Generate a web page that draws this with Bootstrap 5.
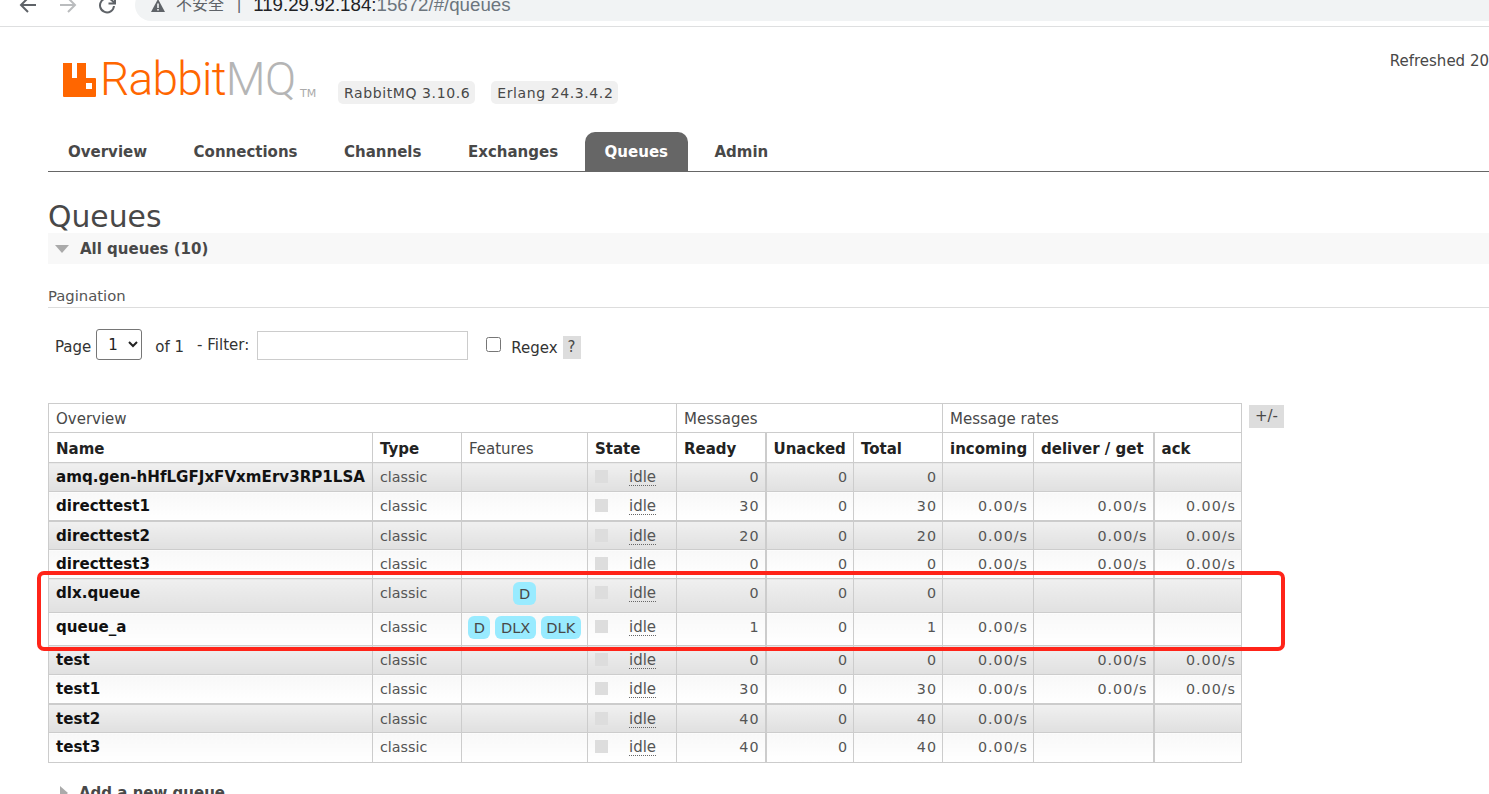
<!DOCTYPE html>
<html lang="zh">
<head>
<meta charset="utf-8">
<title>RabbitMQ Management</title>
<link href="https://cdn.jsdelivr.net/npm/bootstrap@5.3.0/dist/css/bootstrap.min.css" rel="stylesheet">
<style>
html,body{height:794px;overflow:hidden;background:#fff}
body{font-family:"DejaVu Sans","Noto Sans CJK SC",sans-serif;font-size:15px;color:#484848;line-height:1.2}
.chrome-bar{height:27px;border-bottom:1px solid #dedfe0;overflow:hidden;padding-bottom:5px}
.chrome-btns{width:135px;padding-left:19px;gap:22px;height:21px}
.addr-pill{height:32px;flex:1;background:#f1f3f4;border-radius:16px 0 0 16px;padding:0 0 0 15px;font-family:"Liberation Sans","Noto Sans CJK SC",sans-serif;font-size:16px;color:#5f6368;gap:6px}
.addr-sep{margin-left:7px}
.addr-host{color:#202124;font-size:18.7px;margin-left:6px}
.page-wrap{padding-left:48px}
.brand-row{height:105px;padding:35px 0 0 15px;position:relative}
.logo-word{font-family:Roboto,Lato,sans-serif;font-weight:300;font-size:46px;line-height:35px;letter-spacing:-.7px;margin-left:4px;color:#f60;width:193px;white-space:nowrap}
.logo-mq{color:#b5b5b5}
.logo-tm{font-size:11px;color:#aaa;line-height:1;margin:26px 0 0 7px;width:19px}
.ver-pill{background:#f0f0f0;border-radius:5px;height:23px;padding:0 5px 0 6px;font-size:14px;letter-spacing:.6px;line-height:25px;color:#484848;margin-top:19px;white-space:nowrap}
.ver-first{margin-left:19px}
.ver-next{margin-left:16px}
.refreshed{position:absolute;right:0;top:25px;font-size:15px;color:#484848}
.main-tabs{border-bottom:1px solid #666;height:40px;gap:6.5px}
.main-tabs .nav-link{font-weight:700;font-size:15px;color:#484848;padding:11px 20px 0;height:39px;border-radius:10px 10px 0 0;line-height:18px}
.main-tabs .nav-link.on{background:#666;color:#fff}
.pg-title{font-size:29.8px;font-weight:400;color:#484848;margin:28px 0 0;line-height:33px}
.sect-bar{background:#f8f8f8;height:31px;padding-left:7px;font-weight:700;font-size:15px;color:#484848;gap:11px}
.tri-down{width:0;height:0;border-left:7px solid transparent;border-right:7px solid transparent;border-top:8px solid #aaa}
.tri-right{width:0;height:0;border-top:7px solid transparent;border-bottom:7px solid transparent;border-left:8px solid #aaa;margin-left:12px}
.sub-head{margin-top:24px;height:19px;border-bottom:1px solid #ddd;font-size:14.8px;color:#555;line-height:15px;box-sizing:content-box}
.pager-row{padding:23px 0 0 7px;height:95px;font-size:15px;color:#333}
.pg-text-a{margin-top:7px}
.pg-text-b{margin-top:5px;margin-left:13px}
.pg-text-c{margin-top:8px}
.pg-sel{width:46px;height:31px;font-size:15px;padding:0 0 0 7px;margin:-2px 13px 0 5px;border:1px solid #767676;border-radius:3px;background:#fff;color:#222;font-family:inherit}
.pg-input{width:211px;height:29px;border:1px solid #ccc;margin:0 18px 0 8px;background:#fff}
.pg-check{width:15px;height:15px;margin:6px 10px 0 0;accent-color:#555}
.help-q{background:#ddd;color:#484848;width:18px;height:23px;text-align:center;line-height:23px;margin:5px 0 0 5px}
.table-row{align-items:flex-start}
.q-table{border-collapse:collapse;table-layout:fixed;width:1193px;font-size:14.3px;color:#555}
.q-table th,.q-table td{border:1px solid #ccc;padding:6px 7px 0;vertical-align:top;white-space:nowrap;overflow:hidden;line-height:17px}
.q-table thead th{background:#fff;font-weight:700;color:#222;height:30px;font-size:15px;padding-top:8px}
.q-table thead tr:first-child th{font-weight:400;color:#484848;height:29px;padding-top:7px}
.q-table th.plain{font-weight:400!important;color:#484848!important}
.q-table tbody tr{height:29px}
.q-table tbody tr.tall{height:34px}
.q-table tbody tr.tall-b{height:33px}
.q-table tbody tr.tail{height:30px}
.q-table tr.shade td{background:linear-gradient(#f0f0f0,#e0e0e0)}
.q-table tr.lite td{background:linear-gradient(#f8f8f8,#fff)}
.q-table td.qname{font-weight:700;color:#111;font-size:15.1px}
.q-table td.num{text-align:right;letter-spacing:1px;padding-right:5px}
.q-table .heavy-r{border-right:2px solid #ccc}
.q-table tr.heavy-t td{border-top:2px solid #ccc}
.state-dot{display:inline-block;width:13px;height:13px;background:#ddd;margin:1px 21px 0 0;vertical-align:top}
.idle-word{border-bottom:1px dotted #666;display:inline-block;line-height:15px;font-size:15px}
.q-table td.feat{padding:3px 6px 0;text-align:center}
.q-flag{display:inline-block;height:23px;line-height:24px;padding:0 5.5px;background:#99ebff;border-radius:6px;color:#484848;margin-left:5px;font-size:14.6px}
.q-flag:first-child{margin-left:0}
.plus-minus{background:#ddd;color:#484848;width:35px;height:23px;line-height:23px;text-align:center;margin:2px 0 0 7px;font-size:15px}
.add-head{margin-top:21px;font-weight:700;font-size:15px;color:#484848;gap:11px}
.red-mark{position:absolute;left:37px;top:571px;width:1248px;height:80px;border:4px solid #ff2419;border-radius:7px;pointer-events:none}
</style>
</head>
<body>
<div class="chrome-bar d-flex align-items-end">
  <div class="chrome-btns d-flex align-items-end">
    <svg width="18" height="24" viewBox="0 0 18 24" fill="none" stroke="#5f6368" stroke-width="2"><path d="M17 8H2M9 1 2 8l7 7"/></svg>
    <svg width="18" height="24" viewBox="0 0 18 24" fill="none" stroke="#babcbe" stroke-width="2"><path d="M1 8h15M9 1l7 7-7 7"/></svg>
    <svg width="18" height="24" viewBox="0 0 18 24" fill="none" stroke="#5f6368" stroke-width="2"><path d="M15 9a7 7 0 1 1-1.5-5l2.5 2.5"/><path d="M16 0v6.5h-6.5"/></svg>
  </div>
  <div class="addr-pill d-flex align-items-center">
    <svg width="16" height="15" viewBox="0 0 16 15"><path d="M8 1 15 14H1z" fill="#5f6368"/><path d="M7.2 5.5h1.6v4.5H7.2zM7.2 11h1.6v1.6H7.2z" fill="#f1f3f4"/></svg>
    <span class="ms-1">不安全</span><span class="addr-sep">|</span><span class="addr-host">119.29.92.184:<span class="text-secondary">15672/#/queues</span></span>
  </div>
</div>
<div class="page-wrap">
  <div class="brand-row d-flex align-items-start">
    <svg width="33" height="35" viewBox="0 0 33 35"><path fill="#f60" fill-rule="evenodd" d="M0 1h9v15h5V1h9v15h9q1 0 1 1v17q0 1-1 1H1q-1 0-1-1zM23 21v6h6v-6z"/></svg>
    <span class="logo-word">Rabbit<span class="logo-mq">MQ</span></span>
    <span class="logo-tm">TM</span>
    <span class="ver-pill ver-first">RabbitMQ 3.10.6</span>
    <span class="ver-pill ver-next">Erlang 24.3.4.2</span>
    <span class="refreshed">Refreshed 20</span>
  </div>
  <ul class="nav main-tabs">
    <li class="nav-item"><a class="nav-link" href="#">Overview</a></li>
    <li class="nav-item"><a class="nav-link" href="#">Connections</a></li>
    <li class="nav-item"><a class="nav-link" href="#">Channels</a></li>
    <li class="nav-item"><a class="nav-link" href="#">Exchanges</a></li>
    <li class="nav-item"><a class="nav-link on" href="#">Queues</a></li>
    <li class="nav-item"><a class="nav-link" href="#">Admin</a></li>
  </ul>
  <h1 class="pg-title">Queues</h1>
  <div class="sect-bar d-flex align-items-center"><span class="tri-down"></span><span>All queues (10)</span></div>
  <div class="sub-head">Pagination</div>
  <div class="pager-row d-flex align-items-start">
    <span class="pg-text-a">Page</span>
    <select class="pg-sel"><option>1</option></select>
    <span class="pg-text-a">of 1</span>
    <span class="pg-text-b">- Filter:</span>
    <input class="pg-input" type="text" aria-label="Filter">
    <input class="pg-check" type="checkbox" aria-label="Regex">
    <span class="pg-text-c">Regex</span>
    <span class="help-q">?</span>
  </div>
  <div class="table-row d-flex">
    <table class="q-table">
      <colgroup>
        <col style="width:324px"><col style="width:89px"><col style="width:126px"><col style="width:89px">
        <col style="width:89px"><col style="width:88px"><col style="width:89px">
        <col style="width:91px"><col style="width:120px"><col style="width:88px">
      </colgroup>
      <thead>
        <tr><th colspan="4">Overview</th><th colspan="3">Messages</th><th colspan="3">Message rates</th></tr>
        <tr><th>Name</th><th>Type</th><th class="plain">Features</th><th>State</th><th class="heavy-r">Ready</th><th>Unacked</th><th>Total</th><th>incoming</th><th class="heavy-r">deliver / get</th><th>ack</th></tr>
      </thead>
      <tbody>
        <tr class="shade"><td class="qname">amq.gen-hHfLGFJxFVxmErv3RP1LSA</td><td>classic</td><td></td><td><span class="state-dot"></span><span class="idle-word">idle</span></td><td class="num heavy-r">0</td><td class="num">0</td><td class="num">0</td><td></td><td class="heavy-r"></td><td></td></tr>
        <tr class="lite"><td class="qname">directtest1</td><td>classic</td><td></td><td><span class="state-dot"></span><span class="idle-word">idle</span></td><td class="num heavy-r">30</td><td class="num">0</td><td class="num">30</td><td class="num">0.00/s</td><td class="num heavy-r">0.00/s</td><td class="num">0.00/s</td></tr>
        <tr class="shade heavy-t"><td class="qname">directtest2</td><td>classic</td><td></td><td><span class="state-dot"></span><span class="idle-word">idle</span></td><td class="num heavy-r">20</td><td class="num">0</td><td class="num">20</td><td class="num">0.00/s</td><td class="num heavy-r">0.00/s</td><td class="num">0.00/s</td></tr>
        <tr class="lite"><td class="qname">directtest3</td><td>classic</td><td></td><td><span class="state-dot"></span><span class="idle-word">idle</span></td><td class="num heavy-r">0</td><td class="num">0</td><td class="num">0</td><td class="num">0.00/s</td><td class="num heavy-r">0.00/s</td><td class="num">0.00/s</td></tr>
        <tr class="shade tall"><td class="qname">dlx.queue</td><td>classic</td><td class="feat"><span class="q-flag">D</span></td><td><span class="state-dot"></span><span class="idle-word">idle</span></td><td class="num heavy-r">0</td><td class="num">0</td><td class="num">0</td><td></td><td class="heavy-r"></td><td></td></tr>
        <tr class="lite tall-b"><td class="qname">queue_a</td><td>classic</td><td class="feat"><span class="q-flag">D</span><span class="q-flag">DLX</span><span class="q-flag">DLK</span></td><td><span class="state-dot"></span><span class="idle-word">idle</span></td><td class="num heavy-r">1</td><td class="num">0</td><td class="num">1</td><td class="num">0.00/s</td><td class="heavy-r"></td><td></td></tr>
        <tr class="shade"><td class="qname">test</td><td>classic</td><td></td><td><span class="state-dot"></span><span class="idle-word">idle</span></td><td class="num heavy-r">0</td><td class="num">0</td><td class="num">0</td><td class="num">0.00/s</td><td class="num heavy-r">0.00/s</td><td class="num">0.00/s</td></tr>
        <tr class="lite"><td class="qname">test1</td><td>classic</td><td></td><td><span class="state-dot"></span><span class="idle-word">idle</span></td><td class="num heavy-r">30</td><td class="num">0</td><td class="num">30</td><td class="num">0.00/s</td><td class="num heavy-r">0.00/s</td><td class="num">0.00/s</td></tr>
        <tr class="shade heavy-t"><td class="qname">test2</td><td>classic</td><td></td><td><span class="state-dot"></span><span class="idle-word">idle</span></td><td class="num heavy-r">40</td><td class="num">0</td><td class="num">40</td><td class="num">0.00/s</td><td class="heavy-r"></td><td></td></tr>
        <tr class="lite tail"><td class="qname">test3</td><td>classic</td><td></td><td><span class="state-dot"></span><span class="idle-word">idle</span></td><td class="num heavy-r">40</td><td class="num">0</td><td class="num">40</td><td class="num">0.00/s</td><td class="heavy-r"></td><td></td></tr>
      </tbody>
    </table>
    <span class="plus-minus">+/-</span>
  </div>
  <div class="add-head d-flex align-items-center"><span class="tri-right"></span><span>Add a new queue</span></div>
</div>
<div class="red-mark"></div>
<script src="https://cdn.jsdelivr.net/npm/bootstrap@5.3.0/dist/js/bootstrap.bundle.min.js"></script>
</body>
</html>
